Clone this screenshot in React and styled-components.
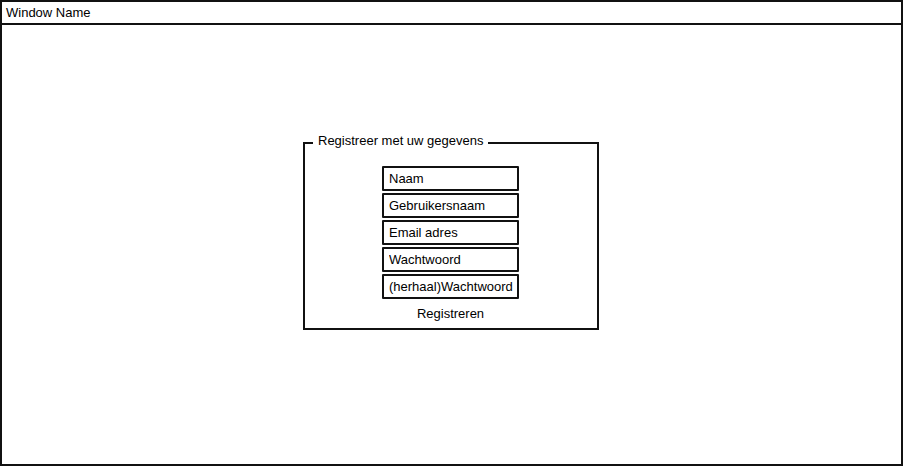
import React from 'react';
import styled, { createGlobalStyle } from 'styled-components';

const GlobalStyle = createGlobalStyle`
  html, body {
    margin: 0;
    padding: 0;
    background: #fff;
  }
  * {
    box-sizing: border-box;
  }
`;

export const Window = styled.div`
  width: 100vw;
  height: 100vh;
  border: 2px solid #111;
  background: #fff;
  display: flex;
  flex-direction: column;
  font-family: "Liberation Sans", Arial, sans-serif;
  font-size: 13px;
  color: #000;
`;

export const TitleBar = styled.div`
  height: 23px;
  line-height: 21px;
  padding-left: 4px;
  border-bottom: 2px solid #111;
`;

export const WindowBody = styled.div`
  flex: 1;
  display: flex;
  justify-content: center;
  align-items: flex-start;
  padding: 110px 1px 0 0;
`;

export const Group = styled.fieldset`
  width: 296px;
  margin: 0;
  padding: 15px 1px 3px 0;
  border: 2px solid #111;
  display: flex;
  flex-direction: column;
  align-items: center;
  gap: 2px;
`;

export const GroupTitle = styled.legend`
  margin-left: 8px;
  padding: 0 5px;
  line-height: 16px;

  span {
    position: relative;
    top: -2px;
  }
`;

export const Field = styled.input`
  width: 137px;
  height: 25px;
  margin: 0;
  padding: 0 0 0 5px;
  border: 2px solid #111;
  border-radius: 1px;
  font: inherit;
  color: #000;
  background: #fff;
  outline: none;

  &::placeholder {
    color: #000;
    opacity: 1;
  }
`;

export const SubmitButton = styled.button`
  height: 24px;
  margin-top: 0;
  padding: 0 8px;
  border: none;
  background: transparent;
  font: inherit;
  color: #000;
  cursor: pointer;
`;

const fields = [
  'Naam',
  'Gebruikersnaam',
  'Email adres',
  'Wachtwoord',
  '(herhaal)Wachtwoord'
];

export default function App() {
  return (
    <>
      <GlobalStyle />
      <Window>
        <TitleBar>Window Name</TitleBar>
        <WindowBody>
          <Group>
            <GroupTitle><span>Registreer met uw gegevens</span></GroupTitle>
            {fields.map(f => (
              <Field key={f} placeholder={f} />
            ))}
            <SubmitButton>Registreren</SubmitButton>
          </Group>
        </WindowBody>
      </Window>
    </>
  );
}
